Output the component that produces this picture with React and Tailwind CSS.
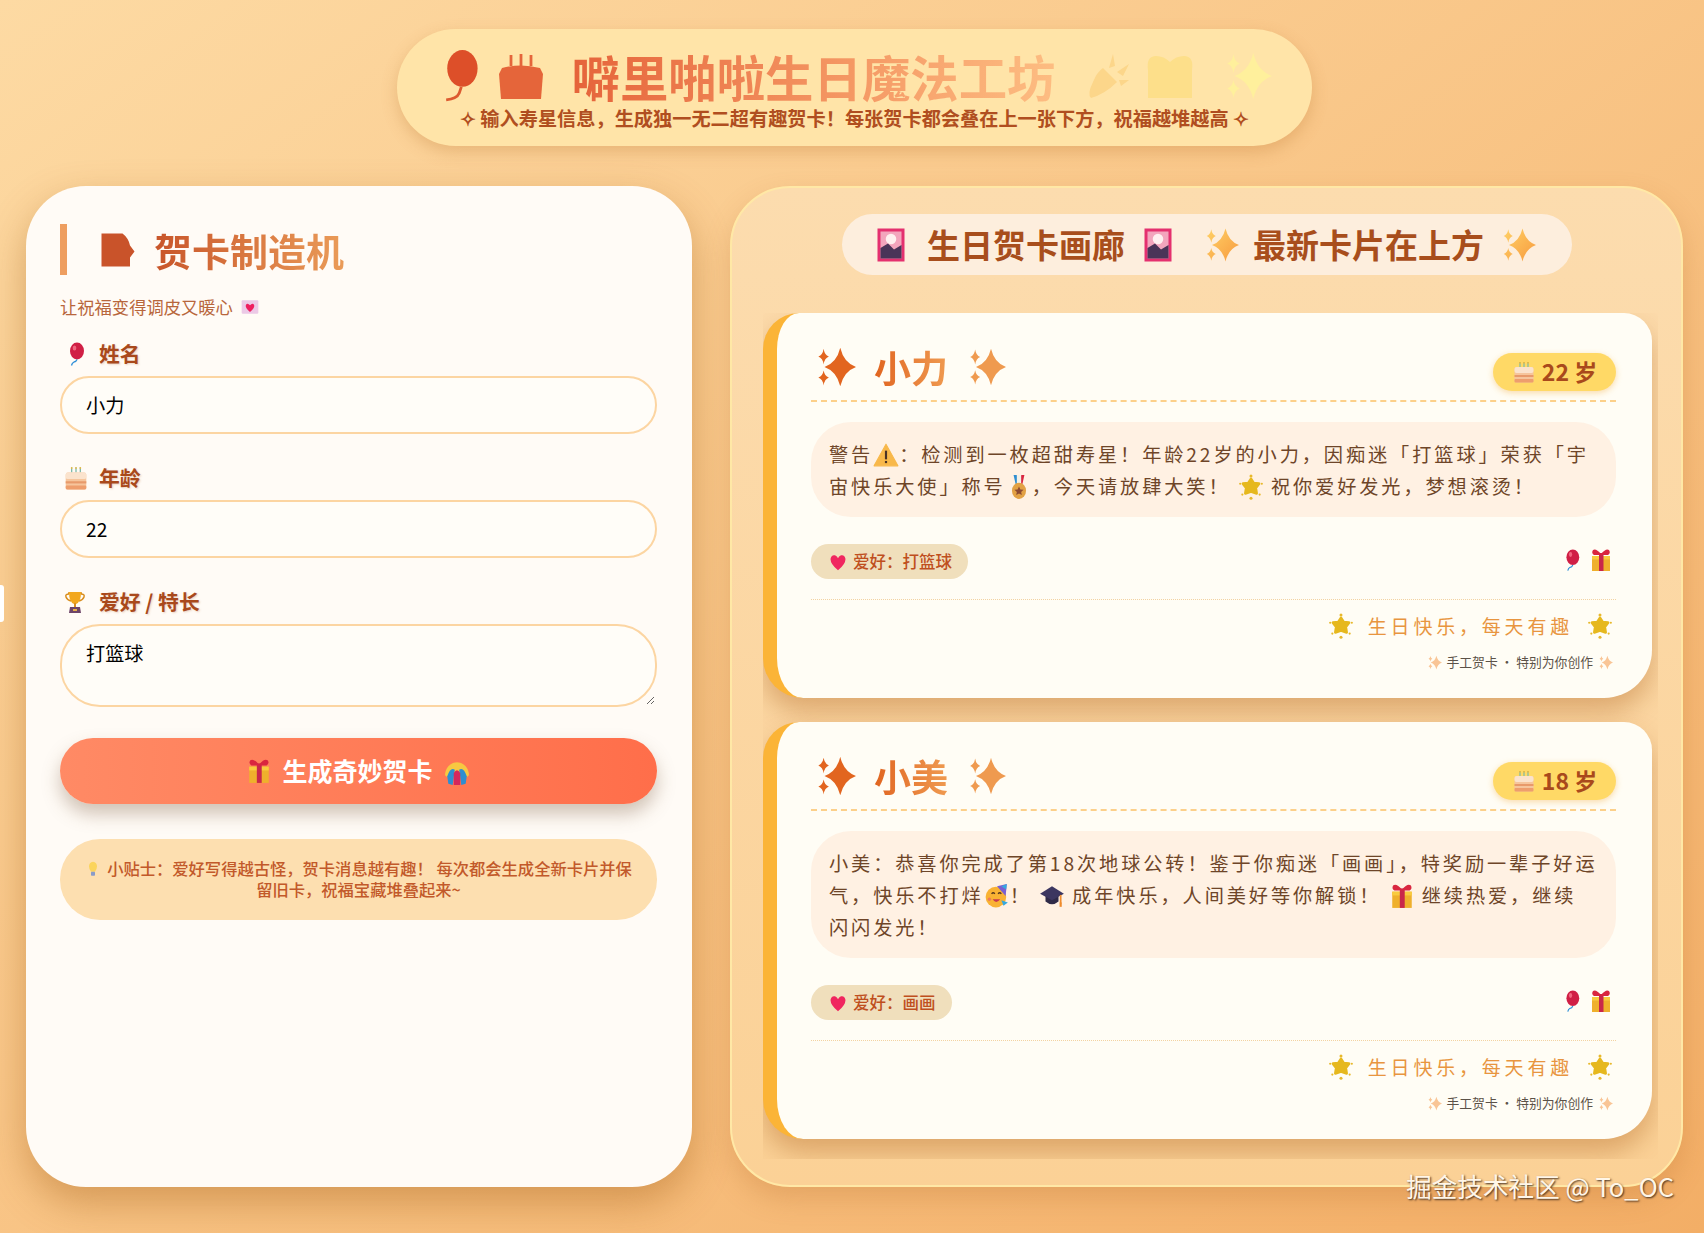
import React from 'react';

const sans = '"Noto Sans CJK SC", sans-serif';

// silhouettes for the gradient-clipped emoji
const sparkPath = "M15 1 Q17 9.5 24 12 Q17 14.5 15 23 Q13 14.5 6 12 Q13 9.5 15 1Z M5.5 1.5 Q6 5 8.5 6 Q6 7 5.5 10.5 Q5 7 2.5 6 Q5 5 5.5 1.5Z M5.5 14 Q6 17 8.5 18 Q6 19 5.5 22.5 Q5 19 2.5 18 Q5 17 5.5 14Z";

const Sil = ({ d, color, className }) => (
    <svg viewBox="0 0 24 24" className={className}><path d={d} fill={color} /></svg>
);

const SilBalloon = ({ className }) => (
    <svg viewBox="0 0 24 24" className={className}>
        <ellipse cx="14.5" cy="8.5" rx="7" ry="8.5" fill="#dd4f29" />
        <path d="M14 17 L13 20 Q12 22.5 7 23" stroke="#dd5a30" strokeWidth="1.3" fill="none" />
    </svg>
);

const SilCake = ({ className }) => (
    <svg viewBox="0 0 24 24" className={className}>
        <path d="M2.5 8 Q12 5.5 21.5 8 L23 11 L22 23.5 L2 23.5 L1 11Z" fill="#e5653a" />
        <path d="M7 1.5 V7 M12 1 V7 M17 1.5 V7" stroke="#e5653a" strokeWidth="1.4" />
    </svg>
);

const Balloon = ({ className }) => (
    <svg viewBox="0 0 24 24" className={className}>
        <ellipse cx="14" cy="9" rx="7" ry="8.5" fill="#d01f45" />
        <ellipse cx="11.5" cy="6" rx="1.8" ry="2.6" fill="#f0667f" />
        <path d="M14 17.5 Q13 20 11 20 Q9 21 8.5 23.5" stroke="#2f8fd8" strokeWidth="1.3" fill="none" />
    </svg>
);

const Cake = ({ className }) => (
    <svg viewBox="0 0 24 24" className={className}>
        <path d="M8 2v5M12 2v5M16 2v5" stroke="#7fb9a8" strokeWidth="1.2" />
        <path d="M8 2v1.5M12 2v1.5M16 2v1.5" stroke="#f2b632" strokeWidth="1.4" />
        <rect x="2.5" y="7" width="19" height="15.5" rx="2" fill="#f6c59c" />
        <rect x="2.5" y="7" width="19" height="6" rx="2" fill="#fbe3cd" />
        <rect x="2.5" y="15" width="19" height="2" fill="#e89a6b" />
        <rect x="2.5" y="19" width="19" height="3.5" rx="1" fill="#ee9e6d" />
    </svg>
);

const Trophy = ({ className }) => (
    <svg viewBox="0 0 24 24" className={className}>
        <path d="M5 3h14M6 4 Q2 4 3 7 Q4 10 8 11M18 4 Q22 4 21 7 Q20 10 16 11" stroke="#d98e1f" strokeWidth="1.5" fill="none" />
        <path d="M6 2h12 Q18 12 13 14 L11 14 Q6 12 6 2Z" fill="#f2a71e" />
        <rect x="11" y="13" width="2" height="4" fill="#d98e1f" />
        <path d="M7 17h10l1 6H6Z" fill="#6d4468" />
        <rect x="10" y="19" width="4" height="2" fill="#e7b04a" />
    </svg>
);

const Letter = ({ className }) => (
    <svg viewBox="0 0 24 24" className={className}>
        <rect x="2" y="4" width="20" height="16" rx="1" fill="#ecc9e6" />
        <path d="M12 18 Q6 13 7 9.5 Q9 6.5 12 10 Q15 6.5 17 9.5 Q18 13 12 18Z" fill="#ee1f5f" />
    </svg>
);

const Gift = ({ className }) => (
    <svg viewBox="0 0 24 24" className={className}>
        <rect x="3" y="8" width="18" height="15" fill="#efb02c" />
        <rect x="3" y="8" width="18" height="3.5" fill="#f9cb3e" />
        <rect x="10" y="5" width="4.5" height="18" fill="#c9274a" />
        <path d="M12 6 Q7 0 4 2 Q2 5 5 7 H12Z M12 6 Q17 0 20 2 Q22 5 19 7 H12Z" fill="#d9263f" />
    </svg>
);

const Confetti = ({ className }) => (
    <svg viewBox="0 0 24 24" className={className}>
        <path d="M1 14 A11 12 0 0 1 23 14 L21 16 H3Z" fill="#f7c842" />
        <path d="M3 15 Q6 6 10 9 L8 23 L4 22Z" fill="#2f8ed0" />
        <path d="M21 15 Q18 6 14 9 L16 23 L20 22Z" fill="#2f8ed0" />
        <path d="M9 12 Q12 7 15 12 L15 23 H9Z" fill="#d4275c" />
    </svg>
);

const Bulb = ({ className }) => (
    <svg viewBox="0 0 24 24" className={className}>
        <path d="M12 1 Q18 2 18 8 Q18 12 15 16 H9 Q6 12 6 8 Q6 2 12 1Z" fill="#fbd45c" />
        <rect x="9" y="16" width="6" height="6" rx="1" fill="#8a9cc8" />
    </svg>
);

const Picture = ({ className }) => (
    <svg viewBox="0 0 24 24" className={className}>
        <rect x="3" y="1" width="18" height="22" fill="#e4306f" />
        <rect x="5" y="3" width="14" height="18" fill="#f3a5bd" />
        <circle cx="12" cy="8" r="3.5" fill="#fff0f0" />
        <path d="M5 21 V14 L10 11 L14 15 L19 12 V21Z" fill="#4a3458" />
    </svg>
);

const Sparkles = ({ className }) => (
    <svg viewBox="0 0 24 24" className={className}>
        <defs>
            <linearGradient id="spk" x1="0" y1="0" x2="1" y2="1">
                <stop offset="0" stopColor="#ffd166" />
                <stop offset="1" stopColor="#f79a3e" />
            </linearGradient>
        </defs>
        <path d={sparkPath} fill="url(#spk)" />
    </svg>
);

const Warning = ({ className }) => (
    <svg viewBox="0 0 24 24" className={className}>
        <path d="M12 2 L23 22 H1Z" fill="#f8b84a" stroke="#f8b84a" strokeLinejoin="round" />
        <rect x="11" y="8" width="2" height="8" fill="#4a3226" />
        <rect x="11" y="17.5" width="2" height="2" fill="#4a3226" />
    </svg>
);

const Medal = ({ className }) => (
    <svg viewBox="0 0 24 24" className={className}>
        <path d="M7 1h3l2 9H9Z" fill="#2f8ed0" />
        <path d="M14 1h3l-2 9h-3Z" fill="#d9263f" />
        <path d="M10 1h4v9h-4Z" fill="#f4f0e6" />
        <ellipse cx="12" cy="15.5" rx="6.5" ry="7.5" fill="#e2a144" />
        <path d="M12 11.5l1.3 2.7 2.9.3-2.2 2 .6 2.9-2.6-1.5-2.6 1.5.6-2.9-2.2-2 2.9-.3Z" fill="#8c4a32" />
    </svg>
);

const Sun = ({ className }) => (
    <svg viewBox="0 0 24 24" className={className}>
        <path d="M12 4.5l2.4 3.8 5 .6-3 4 .8 5-5.2-1.7-5.2 1.7.8-5-3-4 5-.6Z" fill="#e6b81e" stroke="#e6b81e" strokeWidth="2.5" strokeLinejoin="round" />
        <circle cx="12" cy="1.8" r="1.4" fill="#e8b92c" />
        <circle cx="12" cy="22.3" r="1.4" fill="#e8b92c" />
        <circle cx="2" cy="9" r="1" fill="#e8b92c" />
        <circle cx="22" cy="9" r="1" fill="#e8b92c" />
        <circle cx="4" cy="19" r="1" fill="#e8b92c" />
        <circle cx="20" cy="19" r="1" fill="#e8b92c" />
    </svg>
);

const Heart = ({ className }) => (
    <svg viewBox="0 0 24 24" className={className}>
        <path d="M12 23 Q2 15 2 8 Q3 2 8 3 Q11 4 12 7 Q13 4 16 3 Q21 2 22 8 Q22 15 12 23Z" fill="#f0265f" />
    </svg>
);

const Party = ({ className }) => (
    <svg viewBox="0 0 24 24" className={className}>
        <circle cx="11" cy="13" r="9.5" fill="#f9b233" />
        <path d="M12 3 L21 1 L20 12Z" fill="#7a5fd0" />
        <path d="M16 3 L21 1 L20.5 6Z" fill="#35a8df" />
        <path d="M7 10q1.5-2 3 0M13 10q1.5-2 3 0" stroke="#5a3a1e" strokeWidth="1.2" fill="none" />
        <path d="M8 15 Q11 20 15 15Z" fill="#c9374f" />
        <path d="M16 16l6 2-4 3Z" fill="#35a8df" />
        <circle cx="5" cy="15" r="1.6" fill="#ee7a5a" />
    </svg>
);

const GradCap = ({ className }) => (
    <svg viewBox="0 0 24 24" className={className}>
        <path d="M6 11h12v6 Q12 22 6 17Z" fill="#2f2a48" />
        <path d="M12 3 L23 10 L12 16 L1 10Z" fill="#3c3660" />
        <path d="M20 11v8" stroke="#ef8b2c" strokeWidth="1.6" />
        <rect x="19" y="18" width="2" height="4" fill="#ef8b2c" />
    </svg>
);

const SmallSpark = ({ className }) => (
    <svg viewBox="0 0 24 24" className={className}><path d={sparkPath} fill="#f9c596" /></svg>
);

const Field = ({ icon, label, children, className }) => (
    <div className={className}>
        <label className="flex items-center h-[30px] mb-[7px] text-[20.8px] font-bold text-[#a9491c] [text-shadow:1px_1px_2px_rgba(180,100,40,0.25)]">
            <span className="w-[39px] pl-[3px]">{icon}</span>
            {label}
        </label>
        {children}
    </div>
);

const inputCls = "block w-full h-[58px] px-[24px] rounded-[40px] border-[2.5px] border-[#fcd5a2] bg-[#fffdf8] text-[19.2px] text-black outline-none";

const Card = ({ name, age, hobby, message }) => (
    <div className="w-[889px] shrink-0 pl-[34px] pr-[36px] pt-[29px] pb-[26px] bg-[#fffdf5] border-l-[14px] border-[#fbb437] rounded-tl-[36px] rounded-tr-[28px] rounded-br-[48px] rounded-bl-[40px] shadow-[0_14px_26px_rgba(170,95,30,0.38)]">
        <div className="flex items-center justify-between h-[60px] border-b-2 border-dashed border-[#fcd08a]">
            <div className="flex items-center gap-[18px] pl-[3px] h-[46px] -mt-[8px] text-[37px] font-bold">
                <Sil d={sparkPath} color="#e2651f" className="w-[42px] h-[42px]" />
                <span className="bg-linear-to-r from-[#e0651f] to-[#ef9a50] bg-clip-text text-transparent leading-[46px]">{name}</span>
                <Sil d={sparkPath} color="#ef9a4f" className="w-[40px] h-[42px]" />
            </div>
            <div className="flex items-center justify-center gap-[6px] w-[123px] h-[38px] mt-[1px] rounded-[24px] bg-[#ffd966] text-[23px] font-bold text-[#a9491c] shadow-[0_2px_6px_rgba(240,170,60,0.4)]">
                <Cake className="w-[24px] h-[24px]" />
                {age} 岁
            </div>
        </div>
        <div className="mt-[20px] px-[18px] py-[15.5px] rounded-[40px] bg-[#fff1e3] text-[19.2px] leading-[32px] tracking-[2.9px] text-[#6e4528]">
            {message}
        </div>
        <div className="flex items-center justify-between mt-[27px] pb-[20px] border-b border-dotted border-[#f3d3a2]">
            <div className="flex items-center h-[35px] pl-[18px] pr-[16px] rounded-[22px] bg-[#f0dfbc] text-[16.5px] font-medium text-[#bf4f1e]">
                <Heart className="w-[18px] h-[18px] mr-[6px]" />
                爱好&#xFF1A;{hobby}
            </div>
            <div className="flex items-center gap-[7px] pr-[3px] -mt-[4px]">
                <Balloon className="w-[22px] h-[24px]" />
                <Gift className="w-[24px] h-[24px]" />
            </div>
        </div>
        <div className="flex items-center justify-end gap-[14px] mt-[11px] pr-[3px] h-[30px] text-[19px] tracking-[3.8px] text-[#e8953f]">
            <Sun className="w-[26px] h-[26px]" />
            <span>生日快乐&#xFF0C;每天有趣</span>
            <Sun className="w-[26px] h-[26px]" />
        </div>
        <div className="flex items-center justify-end gap-[5px] mt-[11px] pr-[3px] h-[20px] text-[12.8px] text-[#5c5248]">
            <SmallSpark className="w-[15px] h-[15px]" />
            <span>手工贺卡 · 特别为你创作</span>
            <SmallSpark className="w-[15px] h-[15px]" />
        </div>
    </div>
);

const icon = "inline-block w-[26px] h-[26px] align-[-6px]";

const App = () => {
    return (
        <div className="relative min-h-[1233px] overflow-hidden bg-linear-to-br from-[#fddaa3] to-[#f3ae66] pl-[26px] pr-[21px] pt-[29px]" style={{ fontFamily: sans }}>
            {/* small white tab on the window edge */}
            <div className="absolute left-0 top-[585px] w-[4px] h-[37px] bg-white rounded-r-[3px]" />

            {/* header */}
            <header className="ml-[371px] w-[915px] h-[117px] pt-[20px] rounded-[60px] bg-[#ffe4a8] shadow-[0_6px_16px_rgba(190,120,50,0.3)]">
                <div className="flex items-center justify-center gap-[14px] h-[54px]">
                    <SilBalloon className="w-[52px] h-[52px] -ml-[6px]" />
                    <SilCake className="w-[48px] h-[48px]" />
                    <h1 className="mx-[13px] text-[48.4px] leading-[54px] font-bold bg-linear-to-r from-[#e5633a] to-[#fdbd82] bg-clip-text text-transparent">噼里啪啦生日魔法工坊</h1>
                    <Sil d="M4 23 Q2 21 5 15 Q7 10 10 8 L17 15 Q11 21 4 23Z M13 8 L15 1 L16 7Z M17 10 L23 6 L20 12Z M18 14 L23 14 L19 17Z" color="#fcd68a" className="w-[50px] h-[48px]" />
                    <Sil d="M1 9 Q0 2 5 2 Q9 2 12 5 Q15 2 19 2 Q24 2 23 9 V23 H1Z" color="#fddf8a" className="w-[48px] h-[48px]" />
                    <Sil d={sparkPath} color="#fff09c" className="w-[50px] h-[50px] ml-[14px]" />
                </div>
                <p className="mt-[3px] text-center text-[19.2px] leading-[24px] font-bold text-[#b04e20]">✧ 输入寿星信息&#xFF0C;生成独一无二超有趣贺卡&#xFF01;每张贺卡都会叠在上一张下方&#xFF0C;祝福越堆越高 ✧</p>
            </header>

            <div className="flex gap-[38px] mt-[40px]">
                {/* left form */}
                <section className="w-[666px] h-[1001px] shrink-0 pl-[34px] pr-[35px] pt-[38px] rounded-[60px] bg-[#fffbf6] shadow-[0_16px_38px_rgba(165,95,25,0.42)]">
                    <div className="flex items-center h-[51px] pl-[33px] border-l-[7px] border-[#ee9e60]">
                        <Sil d="M1 1 H15 Q19 4 20 9 L23 13 L20 17 V23 H1Z" color="#c9532a" className="w-[36px] h-[38px]" />
                        <h2 className="ml-[18px] text-[38px] leading-[46px] font-bold bg-linear-to-r from-[#c8552a] to-[#ea9b58] bg-clip-text text-transparent">贺卡制造机</h2>
                    </div>
                    <p className="flex items-center mt-[20px] h-[24px] text-[17.3px] text-[#b8663c]">
                        让祝福变得调皮又暖心
                        <Letter className="w-[20px] h-[20px] ml-[7px]" />
                    </p>
                    <Field className="mt-[20px]" icon={<Balloon className="w-[24px] h-[26px]" />} label="姓名">
                        <input className={inputCls} defaultValue="小力" />
                    </Field>
                    <Field className="mt-[29px]" icon={<Cake className="w-[26px] h-[26px]" />} label="年龄">
                        <input className={inputCls} defaultValue="22" />
                    </Field>
                    <Field className="mt-[29px]" icon={<Trophy className="w-[24px] h-[26px]" />} label="爱好 / 特长">
                        <textarea className="block w-full h-[83px] px-[24px] py-[14px] rounded-[40px] border-[2.5px] border-[#fcd5a2] bg-[#fffdf8] text-[19.2px] leading-[26px] text-black outline-none" defaultValue="打篮球" />
                    </Field>
                    <button className="flex items-center justify-center gap-[10px] w-full h-[66px] mt-[31px] rounded-[40px] bg-linear-to-r from-[#ff8a65] to-[#ff6e4a] text-[25px] font-bold text-white shadow-[0_10px_18px_rgba(120,90,60,0.35)]">
                        <Gift className="w-[26px] h-[28px]" />
                        生成奇妙贺卡
                        <Confetti className="w-[28px] h-[26px] mt-[4px]" />
                    </button>
                    <div className="mt-[35px] h-[81px] px-[22px] pt-[19px] rounded-[40px] bg-[#fddfb0] text-center text-[16.3px] leading-[21px] font-medium text-[#c2592a]">
                        <Bulb className="inline-block w-[16px] h-[20px] align-[-4px] mr-[6px]" />
                        小贴士&#xFF1A;爱好写得越古怪&#xFF0C;贺卡消息越有趣&#xFF01; 每次都会生成全新卡片并保留旧卡&#xFF0C;祝福宝藏堆叠起来~
                    </div>
                </section>

                {/* right gallery */}
                <section className="w-[953px] h-[1001px] shrink-0 pt-[26px] rounded-[60px] border-2 border-[#ffe8a6] bg-linear-to-b from-[#fcdcae] to-[#fbd196] shadow-[0_12px_26px_rgba(180,105,40,0.25)]">
                    <div className="flex items-center justify-center w-[730px] h-[61px] pr-[4px] mx-auto rounded-[32px] bg-[#fdeedd] text-[33px] font-bold text-[#a84e1c]">
                        <Picture className="w-[36px] h-[36px]" />
                        <span className="ml-[18px]">生日贺卡画廊</span>
                        <Picture className="w-[36px] h-[36px] ml-[15px]" />
                        <Sparkles className="w-[36px] h-[36px] ml-[27px]" />
                        <span className="ml-[14px]">最新卡片在上方</span>
                        <Sparkles className="w-[36px] h-[36px] ml-[16px]" />
                    </div>
                    <div className="flex flex-col gap-[24px] h-[846px] mt-[38px] ml-[31px] w-[895px] overflow-hidden">
                        <Card
                            name="小力"
                            age={22}
                            hobby="打篮球"
                            message={<>警告<Warning className={icon} />&#xFF1A;检测到一枚超甜寿星&#xFF01;年龄22岁的小力&#xFF0C;因痴迷「打篮球」荣获「宇宙快乐大使」称号<Medal className={icon} />&#xFF0C;今天请放肆大笑&#xFF01; <Sun className={icon} /> 祝你爱好发光&#xFF0C;梦想滚烫&#xFF01;</>}
                        />
                        <Card
                            name="小美"
                            age={18}
                            hobby="画画"
                            message={<>小美&#xFF1A;恭喜你完成了第18次地球公转&#xFF01;鉴于你痴迷「画画」&#xFF0C;特奖励一辈子好运气&#xFF0C;快乐不打烊<Party className={icon} />&#xFF01; <GradCap className={icon} /> 成年快乐&#xFF0C;人间美好等你解锁&#xFF01; <Gift className={icon} /> 继续热爱&#xFF0C;继续闪闪发光&#xFF01;</>}
                        />
                    </div>
                </section>
            </div>

            {/* watermark */}
            <div className="absolute right-[30px] top-[1169px] text-[25.6px] leading-[34px] text-[#fff6e8] [text-shadow:1px_1px_2px_rgba(60,40,25,0.95)]">掘金技术社区 @ To_OC</div>
        </div>
    );
};

export default App;
